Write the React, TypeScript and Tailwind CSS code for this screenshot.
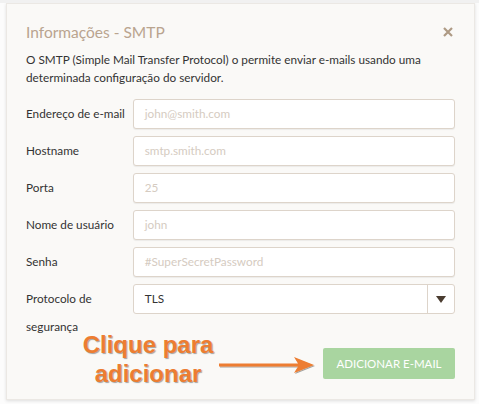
import React from "react";

const rows = [
  { label: "Endereço de e-mail", ph: "john@smith.com" },
  { label: "Hostname", ph: "smtp.smith.com" },
  { label: "Porta", ph: "25" },
  { label: "Nome de usuário", ph: "john" },
  { label: "Senha", ph: "#SuperSecretPassword" },
];

export default function App() {
  return (
    <div
      className="w-[479px] h-[404px] bg-[#fcfcfc] border-t-[3px] border-[#f1f1f1] overflow-hidden"
      style={{ fontFamily: 'Lato, "Open Sans", sans-serif' }}
    >
      <div className="ml-[6px] w-[469px] h-[397px] bg-[#faf9f7] border border-[#ebe8e4] shadow-[0_1px_3px_rgba(0,0,0,0.12)] px-[19px] pt-[19px] relative">
        <div className="flex items-center justify-between h-[20px]">
          <span className="text-[15.5px] text-[#b9a48f]">Informações - SMTP</span>
          <svg width="10" height="10" viewBox="0 0 10 10" className="mr-[2px] -mt-[3px]">
            <path d="M1 1 L9 9 M9 1 L1 9" stroke="#ae9a84" strokeWidth="2.2" />
          </svg>
        </div>
        <p className="mt-[8px] text-[11.75px] leading-[18px] text-[#333]">
          O SMTP (Simple Mail Transfer Protocol) o permite enviar e-mails usando uma determinada configuração do servidor.
        </p>
        <div className="mt-[12px] flex flex-col gap-[7px]">
          {rows.map((r) => (
            <div key={r.label} className="flex items-center">
              <div className="w-[107px] text-[11.75px] text-[#333]">{r.label}</div>
              <div className="w-[323px] h-[30px] bg-white border border-[#ddd4ca] rounded-[3px] shadow-[0_1px_1px_rgba(0,0,0,0.06)] flex items-center px-[11px] text-[11.75px] text-[#d5cbc1]">
                {r.ph}
              </div>
            </div>
          ))}
          <div className="flex items-start">
            <div className="w-[107px] text-[11.75px] leading-[28px] text-[#333] pt-[1px]">
              Protocolo de segurança
            </div>
            <div className="w-[323px] h-[30px] bg-white border border-[#ddd4ca] rounded-[3px] flex items-center text-[11.75px] text-[#333]">
              <span className="flex-1 px-[11px]">TLS</span>
              <div className="w-[27px] h-full border-l border-[#ddd4ca] flex items-center justify-center">
                <svg width="10" height="7" viewBox="0 0 10 7">
                  <polygon points="0,0 10,0 5,7" fill="#4a3c30" />
                </svg>
              </div>
            </div>
          </div>
        </div>
        <div className="flex justify-end mt-[7px]">
          <div className="w-[132px] h-[31px] bg-[#a9d5a0] rounded-[2px] flex items-center justify-center text-white text-[11.5px]">
            ADICIONAR E-MAIL
          </div>
        </div>
        <div
          className="absolute left-[66px] top-[326px] w-[150px] text-center text-[24px] leading-[29px] font-bold text-[#ed7d31]"
          style={{ fontFamily: '"Liberation Sans", Arial, sans-serif', textShadow: "1px 1px 1px rgba(0,0,0,0.35)" }}
        >
          Clique para
          <br />
          adicionar
        </div>
        <svg className="absolute left-[211px] top-[350px]" width="100" height="22" viewBox="0 0 100 22">
          <defs>
            <filter id="sh" x="-10%" y="-30%" width="130%" height="160%">
              <feDropShadow dx="1" dy="1" stdDeviation="0.7" floodColor="#000" floodOpacity="0.35" />
            </filter>
          </defs>
          <path d="M1 9.5 H80 L76 3 L96 11 L76 19 L80 12.5 H1 Z" fill="#ed7d31" filter="url(#sh)" />
        </svg>
      </div>
    </div>
  );
}
